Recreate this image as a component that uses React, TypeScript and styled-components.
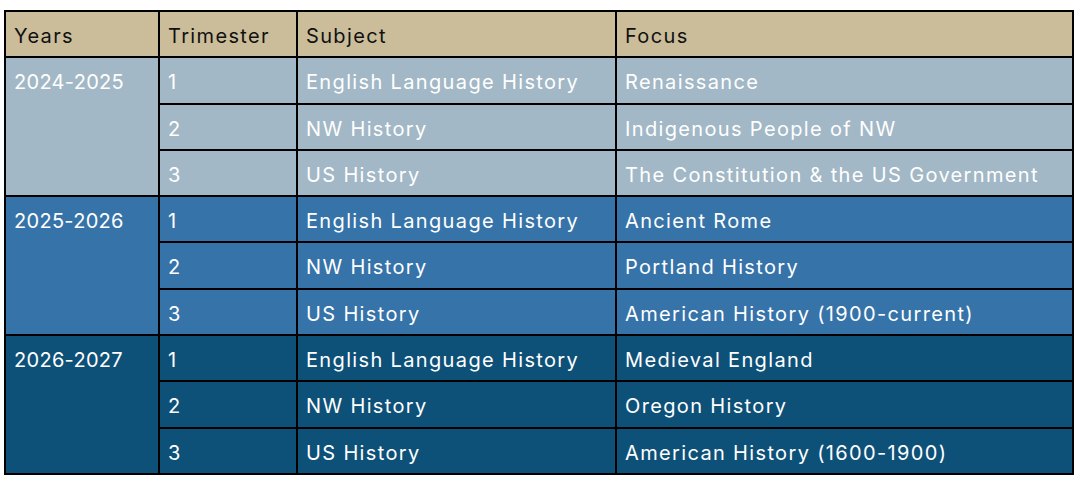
import React from "react";
import styled, { createGlobalStyle } from "styled-components";

const GlobalStyle = createGlobalStyle`
  html, body { margin: 0; padding: 0; background: #ffffff; }
  body { font-family: Inter, "Liberation Sans", sans-serif; }
`;

const Page = styled.div`
  padding: 10px 0 0 4px;
`;

const Grid = styled.div`
  display: grid;
  grid-template-columns: 152px 136px 317px 455px;
  grid-template-rows: repeat(10, 1fr);
  gap: 2px;
  padding: 2px;
  width: 1070px;
  height: 465px;
  box-sizing: border-box;
  background: #000000;
`;

type Tone = "head" | "light" | "mid" | "dark";

const bg: Record<Tone, string> = {
  head: "#cbbd9a",
  light: "#a2b8c6",
  mid: "#3673a9",
  dark: "#0e5178",
};

const Cell = styled.div<{ $tone: Tone }>`
  background: ${(p) => bg[p.$tone]};
  color: ${(p) => (p.$tone === "head" ? "#111111" : "#ffffff")};
  padding: 12px 8px 0 8px;
  font-size: 20px;
  line-height: 24px;
  letter-spacing: 1.35px;
  white-space: nowrap;
  overflow: hidden;
`;

const YearCell = styled(Cell)`
  grid-column: 1;
  grid-row: span 3;
  letter-spacing: 0.3px;
`;

const groups: { years: string; tone: Tone; rows: [string, string, string][] }[] = [
  {
    years: "2024-2025",
    tone: "light",
    rows: [
      ["1", "English Language History", "Renaissance"],
      ["2", "NW History", "Indigenous People of NW"],
      ["3", "US History", "The Constitution & the US Government"],
    ],
  },
  {
    years: "2025-2026",
    tone: "mid",
    rows: [
      ["1", "English Language History", "Ancient Rome"],
      ["2", "NW History", "Portland History"],
      ["3", "US History", "American History (1900-current)"],
    ],
  },
  {
    years: "2026-2027",
    tone: "dark",
    rows: [
      ["1", "English Language History", "Medieval England"],
      ["2", "NW History", "Oregon History"],
      ["3", "US History", "American History (1600-1900)"],
    ],
  },
];

export default function App() {
  return (
    <>
      <GlobalStyle />
      <Page>
        <Grid>
          {["Years", "Trimester", "Subject", "Focus"].map((h) => (
            <Cell key={h} $tone="head">
              {h}
            </Cell>
          ))}
          {groups.map((g) => (
            <React.Fragment key={g.years}>
              <YearCell $tone={g.tone}>{g.years}</YearCell>
              {g.rows.map((r) =>
                r.map((c, i) => (
                  <Cell key={g.years + r[0] + i} $tone={g.tone}>
                    {c}
                  </Cell>
                ))
              )}
            </React.Fragment>
          ))}
        </Grid>
      </Page>
    </>
  );
}
